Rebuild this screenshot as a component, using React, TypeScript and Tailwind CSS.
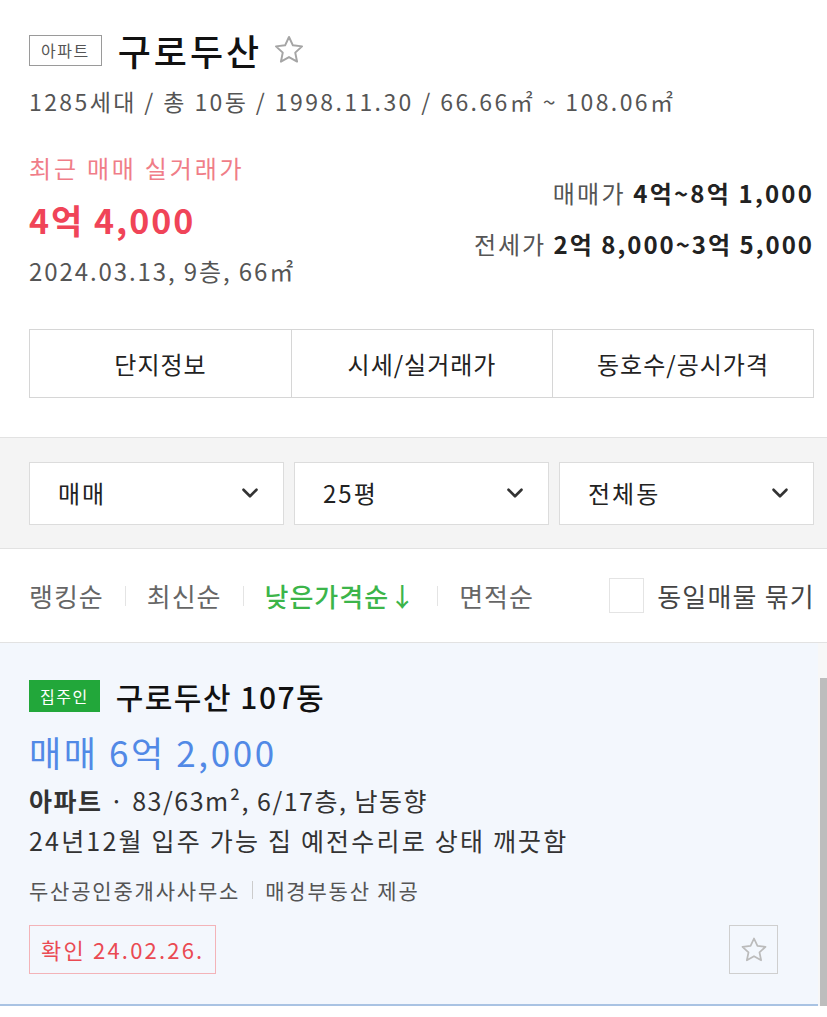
import { ChevronDown } from "lucide-react";

const font = { fontFamily: '"Noto Sans CJK KR", "Noto Sans", sans-serif' };

function StarIcon({ size, color }: { size: number; color: string }) {
  return (
    <svg width={size} height={size} viewBox="0 0 24 24" fill="none" stroke={color} strokeWidth="1.4" strokeLinejoin="round">
      <path d="M12 2.8l2.75 5.9 6.45.75-4.8 4.4 1.3 6.35L12 17l-5.7 3.2 1.3-6.35-4.8-4.4 6.45-.75z" />
    </svg>
  );
}

function Select({ label }: { label: string }) {
  return (
    <div className="flex-1 h-[63px] bg-white border border-[#dcdcdc] flex items-center justify-between pl-[28px] pr-[20px]">
      <span className="text-[24px] text-[#222] tracking-[2px]">{label}</span>
      <ChevronDown size={26} strokeWidth={2.4} className="text-[#333]" />
    </div>
  );
}

export default function App() {
  return (
    <div className="w-[827px] h-[1017px] bg-white overflow-hidden" style={font}>
      {/* Complex header */}
      <section className="pl-[29px] pr-[13px] pt-[29px]">
        <div className="flex items-center h-[42px]">
          <span className="border border-[#9a9a9a] text-[16px] leading-none text-[#555] tracking-[1.5px] px-[11px] h-[31px] flex items-center">아파트</span>
          <h1 className="ml-[16px] text-[36px] font-medium text-[#111] leading-none tracking-[3px]">구로두산</h1>
          <span className="ml-[10px] flex items-center">
            <StarIcon size={34} color="#a5a5a5" />
          </span>
        </div>
        <p className="mt-[15px] text-[23px] text-[#555] leading-[30px] tracking-[2.4px]">
          1285세대 / 총 10동 / 1998.11.30 / 66.66㎡ ~ 108.06㎡
        </p>

        <div className="flex justify-between mt-[37px]">
          <div>
            <p className="text-[24px] text-[#f07d88] leading-[30px] tracking-[2.8px]">최근 매매 실거래가</p>
            <p className="mt-[17px] text-[34px] font-bold text-[#f04458] leading-[40px] tracking-[2px]">4억 4,000</p>
            <p className="mt-[16px] text-[24px] text-[#555] leading-[30px] tracking-[1.9px]">2024.03.13, 9층, 66㎡</p>
          </div>
          <div className="text-right pt-[24px]">
            <p className="text-[24px] leading-[32px] tracking-[2.2px] text-[#555]">
              매매가 <span className="font-bold text-[#222]">4억~8억 1,000</span>
            </p>
            <p className="mt-[19px] text-[24px] leading-[32px] tracking-[2px] text-[#555]">
              전세가 <span className="font-bold text-[#222]">2억 8,000~3억 5,000</span>
            </p>
          </div>
        </div>

        <div className="mt-[43px] grid grid-cols-3 border border-[#d6d6d6] h-[69px]">
          {["단지정보", "시세/실거래가", "동호수/공시가격"].map((t, i) => (
            <div
              key={t}
              className={`flex items-center justify-center text-[24px] text-[#222] tracking-[1px] ${i > 0 ? "border-l border-[#d6d6d6]" : ""}`}
            >
              {t}
            </div>
          ))}
        </div>
      </section>

      {/* Filters */}
      <section className="mt-[39px] bg-[#f4f4f4] border-t border-b border-[#e2e2e2] h-[112px] pl-[29px] pr-[13px] flex items-center gap-[10px]">
        <Select label="매매" />
        <Select label="25평" />
        <Select label="전체동" />
      </section>

      {/* Sort row */}
      <section className="h-[94px] pl-[29px] pr-[12px] flex items-center justify-between border-b border-[#e2e2e2]">
        <div className="flex items-center text-[26px] tracking-[1px] text-[#666]">
          <span>랭킹순</span>
          <span className="mx-[21px] w-px h-[20px] bg-[#e4e4e4]" />
          <span>최신순</span>
          <span className="mx-[21px] w-px h-[20px] bg-[#e4e4e4]" />
          <span className="text-[#3cb54a] font-medium">낮은가격순↓</span>
          <span className="mx-[21px] w-px h-[20px] bg-[#e4e4e4]" />
          <span>면적순</span>
        </div>
        <div className="flex items-center gap-[13px]">
          <span className="w-[35px] h-[35px] border border-[#e4e4e4] bg-white" />
          <span className="text-[26px] tracking-[1.2px] text-[#444]">동일매물 묶기</span>
        </div>
      </section>

      {/* Listing */}
      <section className="flex">
        <div className="flex-1 bg-[#f3f7fd] border-b-2 border-[#a9c3e3] pl-[29px] pr-[40px] pt-[37px] pb-[30px]">
          <div className="flex items-center h-[32px]">
            <span className="bg-[#22a73a] text-white text-[16px] tracking-[1.5px] leading-none h-[32px] px-[11px] flex items-center">집주인</span>
            <span className="ml-[16px] text-[30px] font-medium text-[#111] tracking-[1.5px] leading-none">구로두산 107동</span>
          </div>
          <p className="mt-[20px] text-[35px] text-[#5189e6] leading-[40px] tracking-[2.6px]">매매 6억 2,000</p>
          <p className="mt-[11px] text-[25px] text-[#333] leading-[34px] tracking-[1.5px]">
            <span className="font-bold">아파트</span> · 83/63m², 6/17층, 남동향
          </p>
          <p className="mt-[6px] text-[25px] text-[#333] leading-[34px] tracking-[2.2px]">
            24년12월 입주 가능 집 예전수리로 상태 깨끗함
          </p>
          <div className="mt-[18px] flex items-center text-[21px] text-[#555] tracking-[1.8px] leading-[30px]">
            <span>두산공인중개사사무소</span>
            <span className="mx-[12px] w-px h-[18px] bg-[#ccc]" />
            <span>매경부동산 제공</span>
          </div>
          <div className="mt-[20px] flex items-center justify-between">
            <span className="h-[49px] px-[11px] border border-[#f3b3b8] text-[#ea4a53] text-[22px] tracking-[2.2px] flex items-center">
              확인 24.02.26.
            </span>
            <span className="w-[49px] h-[49px] border border-[#cfcfcf] flex items-center justify-center">
              <StarIcon size={30} color="#bbb" />
            </span>
          </div>
        </div>
        <div className="w-[9px] flex flex-col bg-[#f7f7f7]">
          <div className="h-[35px]" />
          <div className="flex-1 ml-[2px] bg-[#bdbdbd]" />
        </div>
      </section>
    </div>
  );
}
